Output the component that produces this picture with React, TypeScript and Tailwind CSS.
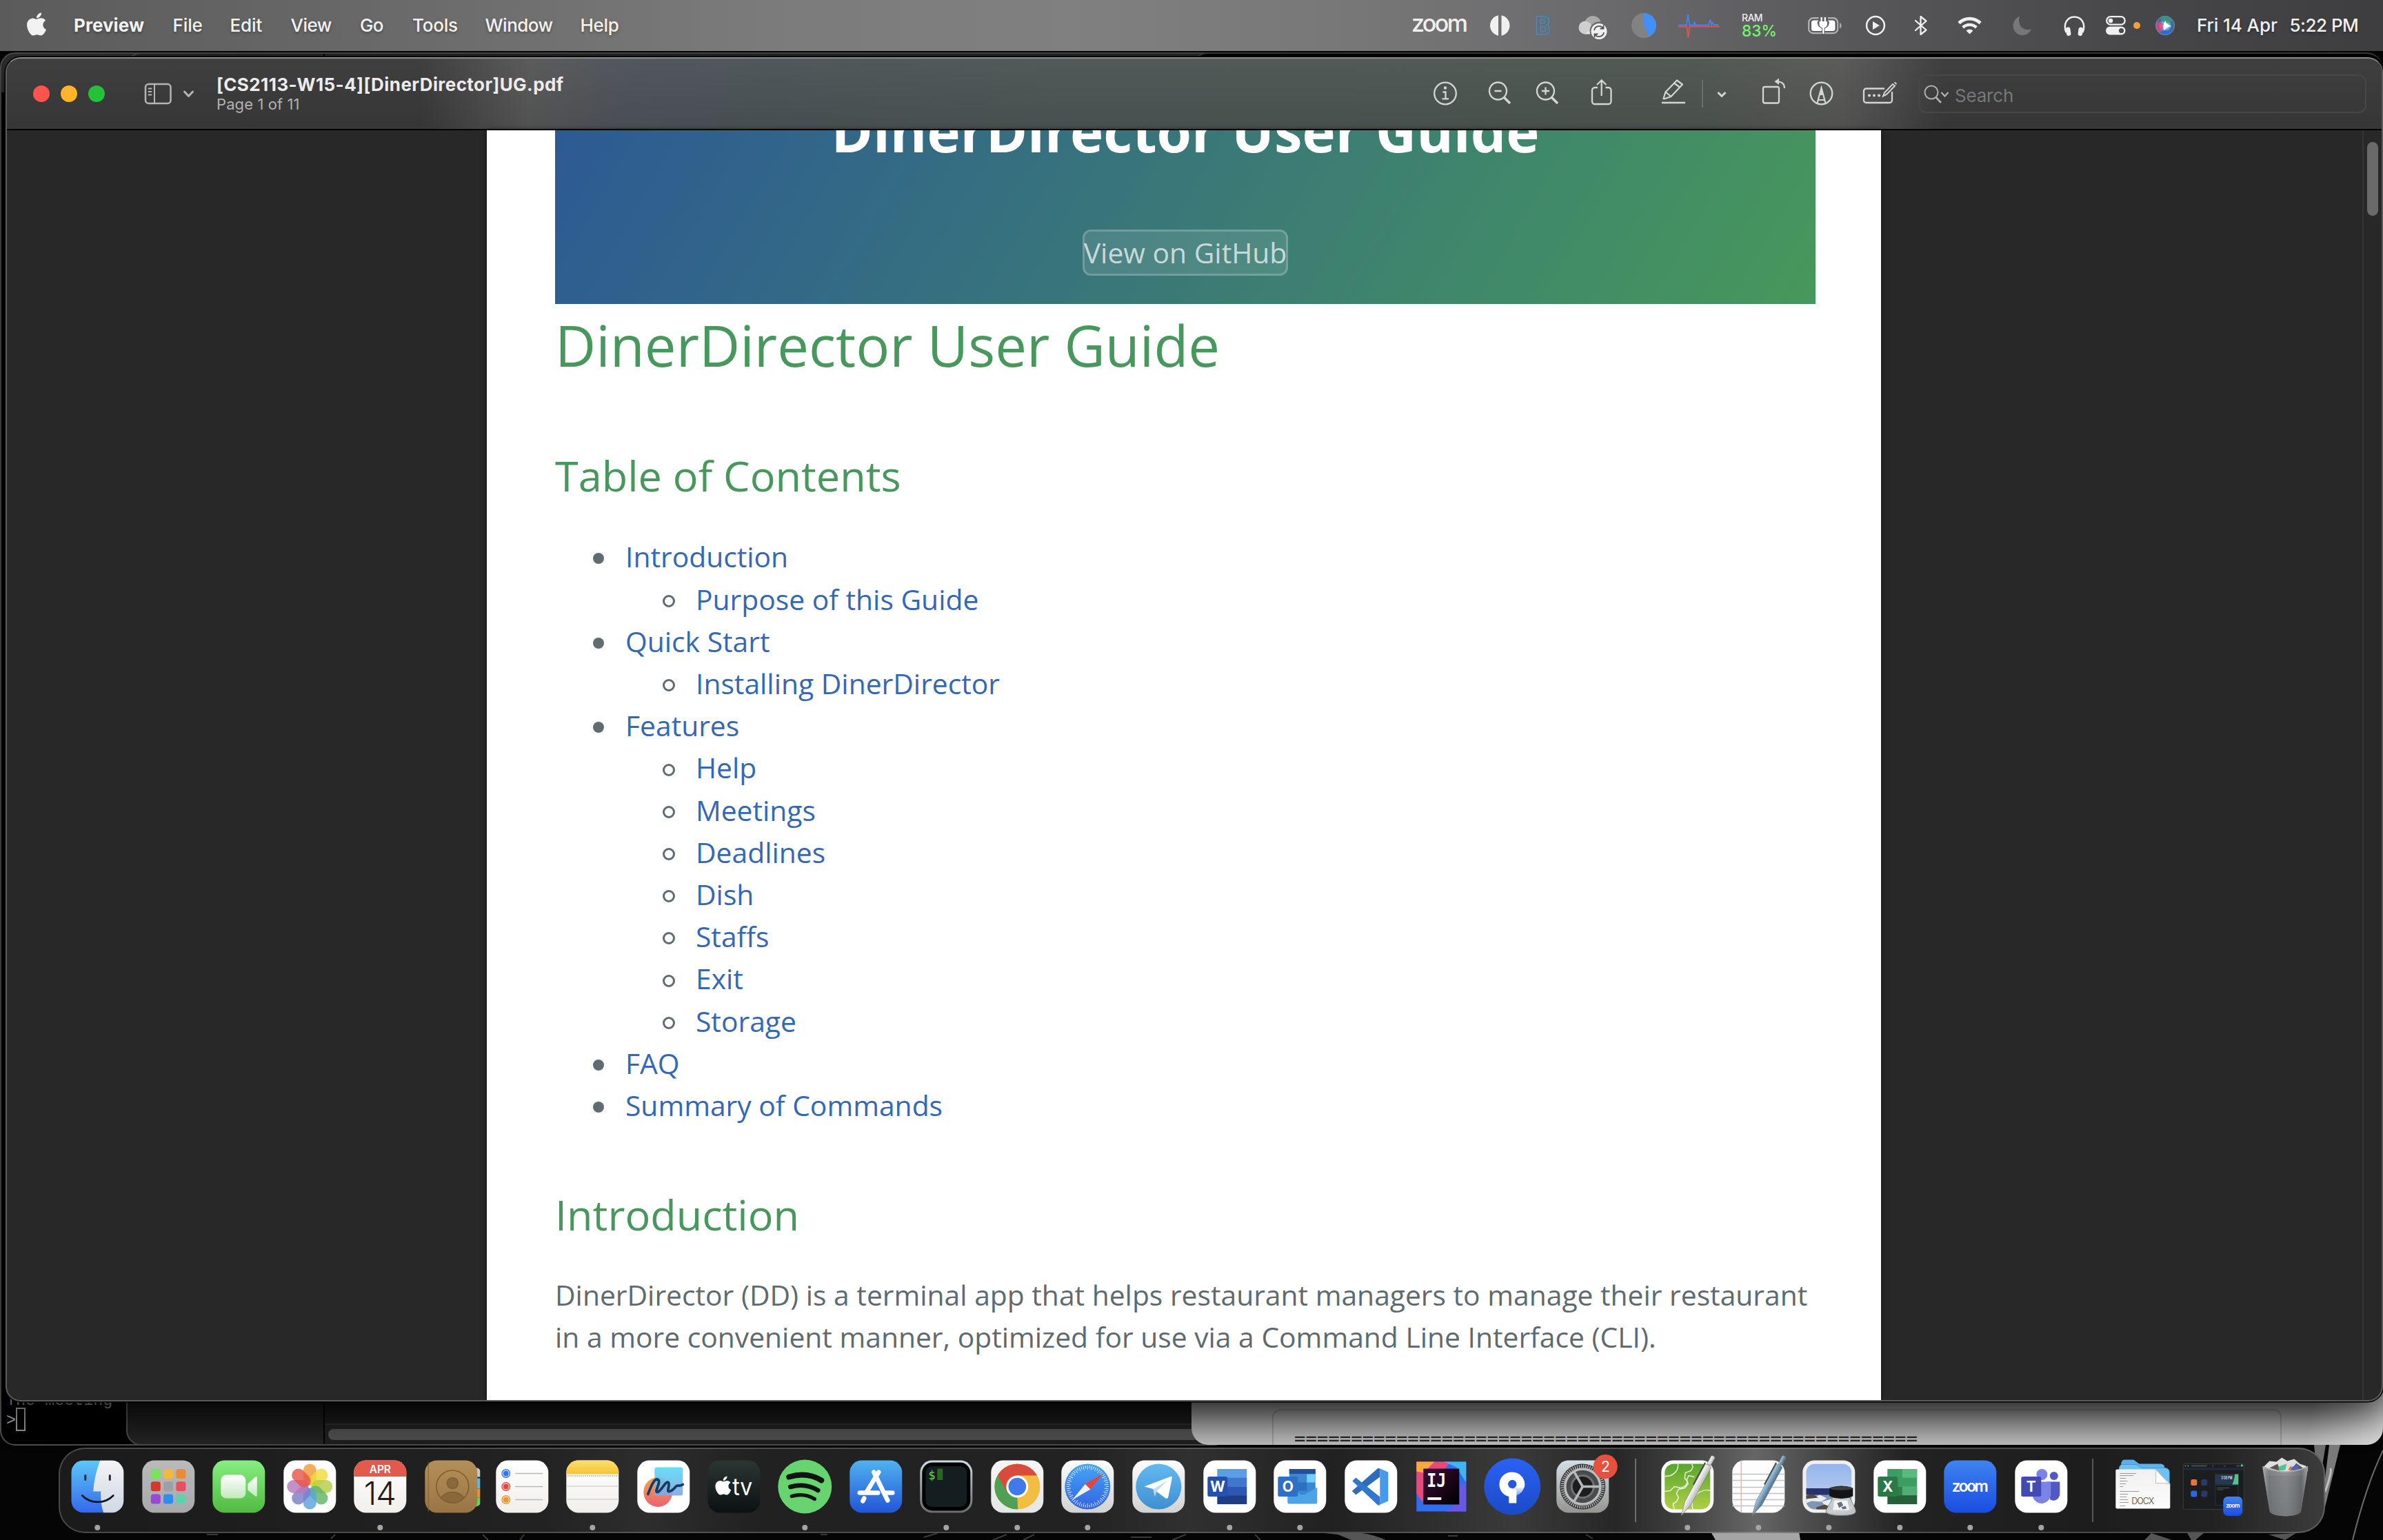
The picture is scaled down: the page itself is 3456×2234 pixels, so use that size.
import React from "react";
import { FaApple } from "react-icons/fa";

type Kids = { children?: React.ReactNode };

/* A slice of a horizontal bar; its drawing uses the bar's own x coordinates. */
function Slice({ x, to, y = 0, h, children }: { x: number; to: number; y?: number; h: number } & Kids) {
  return (
    <svg className="shrink-0 overflow-visible" width={to - x} height={h} viewBox={`${x} ${y} ${to - x} ${h}`} fill="none">
      {children}
    </svg>
  );
}

/* ---------------------------------------------------------------- menu bar */

const MENUS: [string, string][] = [
  ["File", "w-[83px] tracking-[-0.1px]"],
  ["Edit", "w-[88px] tracking-[-0.1px]"],
  ["View", "w-[100.5px] tracking-[-0.5px]"],
  ["Go", "w-[76px] tracking-[-0.8px]"],
  ["Tools", "w-[105.5px] tracking-[-0.2px]"],
  ["Window", "w-[138px] tracking-[-0.5px]"],
  ["Help", "w-[90px] tracking-[-0.3px]"],
];

function MenuBar() {
  const W = "#f0f0f0";
  return (
    <header className="flex h-[74px] w-full items-center justify-between bg-[linear-gradient(90deg,#5b5b5b_0%,#686868_15%,#7b7b7b_32%,#808080_45%,#777777_57%,#69686b_68%,#57575a_78%,#464648_90%,#3e3e40_100%)]">
      <div className="flex items-center pl-[34px] text-[26px] font-medium leading-[74px] text-[#f2f2f2] [text-shadow:0_2px_4px_rgba(0,0,0,0.3)]">
        <div className="flex w-[73px]">
          <FaApple size={38} className="-mt-1" />
        </div>
        <div className="w-[143.5px] font-bold tracking-[0.05px]">Preview</div>
        {MENUS.map(([name, cls]) => (
          <div key={name} className={cls}>{name}</div>
        ))}
      </div>
      <div className="flex items-center">
        <Slice x={2040} to={2145} h={74}>
          <text x="2047" y="46" fontSize="34" fontWeight="500" fill={W} textLength="82">zoom</text>
        </Slice>
        <Slice x={2145} to={2210} h={74}>
          <path d="M2173 22.3A15 15 0 0 0 2173 51.7ZM2177.5 22.3A15 15 0 0 1 2177.5 51.7Z" fill={W} />
        </Slice>
        <Slice x={2210} to={2270} h={74}>
          <text x="2226" y="49.5" fontSize="35" fontWeight="700" stroke="#3a8cc8" strokeWidth="1.5" fontFamily="DejaVu Sans" textLength="24" lengthAdjust="spacingAndGlyphs">B</text>
        </Slice>
        <Slice x={2270} to={2350} h={74}>
          <circle cx="2310" cy="35" r="12" fill="#a9a9a9" />
          <circle cx="2299" cy="40" r="9.5" fill="#cfcfcf" />
          <path d="M2298 49.5L2318 36l10 13.5Z" fill="#e6e6e6" />
          <circle cx="2319" cy="45" r="13.5" fill="#69686a" />
          <circle cx="2319" cy="45.5" r="11.5" fill={W} />
          <path d="M2312 44a7.2 7.2 0 0 1 13-3M2326 47a7.2 7.2 0 0 1-13 3M2325.500 36.500v5h-5M2312.500 54.500v-5h5" stroke="#555" strokeWidth="1.8" />
        </Slice>
        <Slice x={2350} to={2420} h={74}>
          <circle cx="2384" cy="37" r="18" fill="#828282" />
          <path d="M2384 37V19a18 18 0 0 1 7.800 34.200Z" fill="#438ff8" />
        </Slice>
        <Slice x={2420} to={2510} h={74}>
          <path d="M2434 36.500h12l2-16 2.500 16h6l1-5 1.500 5h19l2.200-8.500 2 8 1.500-3 2 3h6.300" stroke="#3f86ee" strokeWidth="1.8" />
          <path d="M2434 38.500h12.500l1.800 16.500 2-16.500H2494" stroke="#e4524a" strokeWidth="1.8" />
        </Slice>
        <Slice x={2510} to={2600} h={74}>
          <text x="2526" y="31" fontSize="14" fontWeight="500" fill={W} textLength="30.5">RAM</text>
          <text x="2526" y="53" fontSize="23.5" fontWeight="500" fill="#72f56c" textLength="51" lengthAdjust="spacingAndGlyphs">83%</text>
        </Slice>
        <Slice x={2600} to={2690} h={74}>
          <rect x="2623.200" y="26.200" width="42" height="22" rx="6.500" stroke="#b3b3b5" strokeWidth="2.200" />
          <rect x="2627" y="29.500" width="34.500" height="15.500" rx="3.500" fill="#fff" />
          <path d="M2668 33c3.500.8 3.500 7.500 0 8.500Z" fill="#aaa" />
          <path d="M2637.500 23v7c-2 .6-2 2-1.500 5 .6 3 3 5 6 6.200V50h4.500v-8.800c3-1.200 5.500-3.200 6-6.200.5-3 .4-4.400-1.500-5v-7Z" fill="#5f5f61" />
          <path d="M2640.500 25v6h-2v4c0 3 2.500 5 4.500 5.500V49h2.500v-8.500c2-.5 4.500-2.500 4.500-5.500v-4h-2v-6h-2.300v6h-3v-6Z" fill="#fff" />
        </Slice>
        <Slice x={2690} to={2755} h={74}>
          <circle cx="2720" cy="37" r="12.900" stroke={W} strokeWidth="2.500" />
          <path d="M2716 31v12l10-6Z" fill={W} />
        </Slice>
        <Slice x={2755} to={2815} h={74}>
          <path d="M2778 30l15.500 13.500-8 6.500V24l8 6.500L2778 44" stroke={W} strokeWidth="2.300" strokeLinejoin="round" strokeLinecap="round" />
        </Slice>
        <Slice x={2815} to={2895} h={74}>
          <path d="M2841 33.500a22 22 0 0 1 31 0" stroke={W} strokeWidth="4.600" />
          <path d="M2846.800 39.800a14 14 0 0 1 19.400 0" stroke={W} strokeWidth="4.400" />
          <path d="M2851.500 44.500a7 7 0 0 1 10 0l-5 5Z" fill={W} />
        </Slice>
        <Slice x={2895} to={2970} h={74}>
          <path d="M2929 23.500c-5.500 2.500-9.500 8-9.500 14.500a13.700 13.700 0 0 0 13.700 13.200c5.500 0 10.500-3.400 12.800-8.700-11 2.800-20.500-4.500-17-19Z" fill="#77777a" />
        </Slice>
        <Slice x={2970} to={3038} h={74}>
          <path d="M2996.500 47c-5-13 2-22.500 12-22.500s17 9.500 12 22.500" stroke={W} strokeWidth="2.500" />
          <rect x="2996.500" y="39.500" width="6.500" height="12.500" rx="3" fill={W} transform="rotate(-8 2999 46)" />
          <rect x="3014" y="39.500" width="6.500" height="12.500" rx="3" fill={W} transform="rotate(8 3017 46)" />
        </Slice>
        <Slice x={3038} to={3112} h={74}>
          <rect x="3055.200" y="24.200" width="26.500" height="11.500" rx="5.700" stroke={W} strokeWidth="2.300" />
          <circle cx="3061" cy="30" r="3.200" fill={W} />
          <rect x="3054" y="38.500" width="28.500" height="12" rx="6" fill={W} />
          <circle cx="3076.500" cy="44.500" r="3.600" fill="#4a4a4c" />
          <circle cx="3099" cy="37" r="5" fill="#f5a03a" />
        </Slice>
        <Slice x={3112} to={3186} h={74}>
          <defs>
            <radialGradient id="siri" cx=".5" cy=".5" r=".5">
              <stop offset="0" stopColor="#fff" />
              <stop offset=".3" stopColor="#9fd0ee" />
              <stop offset=".7" stopColor="#3567a8" />
              <stop offset="1" stopColor="#56708a" />
            </radialGradient>
          </defs>
          <circle cx="3140" cy="37" r="14" fill="url(#siri)" />
          <path d="M3127 33a14 14 0 0 0 5 15c4-3 7-9 6-13-2-4-7-4-11-2Z" fill="#e2457f" opacity=".75" />
          <path d="M3133 25a14 14 0 0 1 18 5c-4 4-10 5-14 2-3-2-4-5-4-7Z" fill="#2f9f7c" opacity=".8" />
          <path d="M3132 49a14 14 0 0 0 18-2c-4-4-14-5-18 2Z" fill="#2b6be0" opacity=".8" />
          <path d="M3140 30l3 5 6 3-7 2-3 4-2-6Z" fill="#fff" />
          <circle cx="3140" cy="37" r="13.500" stroke="#6d8597" strokeWidth="1" />
        </Slice>
        <div className="flex w-[270px] text-[26px] font-medium leading-[74px] text-[#f0f0f0] [text-shadow:0_2px_4px_rgba(0,0,0,0.3)]">
          <span className="w-[134.5px] whitespace-nowrap tracking-[-0.1px]">Fri 14 Apr</span>
          <span className="whitespace-nowrap tracking-[-0.5px]">5:22 PM</span>
        </div>
      </div>
    </header>
  );
}

/* ---------------------------------------------------------- back windows */

function TerminalBehind() {
  return (
    <div className="absolute left-0 top-[76px] flex h-[2021px] w-[400px] flex-col justify-end rounded-[22px] border-2 border-[#4c4c4c] bg-[linear-gradient(180deg,#2e2e2e_0,#2e2e2e_56px,#000_56px)] pl-[7px] font-['Liberation_Mono'] text-[23.400px] text-[#a0a0a0]">
      <div className="-mb-[10px] whitespace-pre leading-[34px] text-[#7a7a7a]">The meeting</div>
      <div className="flex h-[56px] items-start">
        <span className="mt-[5px] leading-[34px]">&gt;</span>
        <span className="mt-[3px] h-[34px] w-[14px] border-2 border-[#8f8f8f]" />
      </div>
    </div>
  );
}

function EditorBehind() {
  return (
    <div className="absolute left-[183px] top-[76px] flex h-[2021px] w-[1600px] rounded-[22px] border-2 border-[#4a4a4a] bg-[#262626]">
      <div className="flex w-[286px] items-end border-r-2 border-black">
        <div className="h-[64px] w-full rounded-bl-[20px] bg-[linear-gradient(180deg,#121212,#232323)]" />
      </div>
      <div className="flex flex-1 flex-col justify-end">
        <div className="h-[32px] bg-[linear-gradient(180deg,#0e0e0e,#1a1a1a)]" />
        <div className="flex h-[30px] items-center border-t-2 border-[#2a2a2a] bg-[#1e1e1e] pl-[5px]">
          <div className="h-[16px] flex-1 rounded-l-full bg-[#4b4b4b]" />
        </div>
      </div>
    </div>
  );
}

function MessageBehind() {
  return (
    <div className="absolute left-[1728px] top-[76px] flex h-[2020px] w-[1728px] flex-col justify-end overflow-hidden rounded-[24px] border-t-2 border-[#3c3c3c] bg-black">
      <div className="flex h-[80px] items-end bg-[linear-gradient(180deg,#5d5d5d,#6b6b6b_20%,#b9b9b9)] pl-[117px]">
        <div className="flex h-[52px] w-[1464px] items-start rounded-t-[12px] border-x-2 border-t-2 border-black/15 pl-[30px] pt-[20px] font-['DejaVu_Sans_Mono'] text-[27.300px] leading-[42px] text-[#222]">
          {"=".repeat(55)}
        </div>
        <div className="h-full flex-1 bg-[linear-gradient(100deg,transparent_30%,rgba(255,255,255,0.45))]" />
      </div>
    </div>
  );
}

/* --------------------------------------------------------- preview window */

function Toolbar() {
  const C = "#d3d6d4";
  return (
    <div className="flex h-[104px] shrink-0 items-center border-b-2 border-black bg-[linear-gradient(180deg,rgba(255,255,255,0.03),rgba(0,0,0,0.06)),linear-gradient(90deg,#393939_0px,#393939_600px,#565656_755px,#4d5259_890px,#4b5256_1100px,#4b5553_1500px,#4c5552_1950px,#4d544e_2450px,#565755_2660px,#4f504f_2700px,#393939_2810px,#393939_100%)]">
      <div className="flex w-[304px] items-center">
        <div className="flex w-[142px] shrink-0 gap-[16px] pl-[38px]">
          <span className="size-[24px] rounded-full bg-[#ff544d]" />
          <span className="size-[24px] rounded-full bg-[#ffb429]" />
          <span className="size-[24px] rounded-full bg-[#25c138]" />
        </div>
        <Slice x={152} to={306} y={84} h={104}>
          <g stroke="#b5b5b5" strokeWidth="2.500" strokeLinecap="round" strokeLinejoin="round">
            <rect x="211" y="122" width="36.500" height="28" rx="4.500" />
            <path d="M224 122v28M215.500 128.500h4M215.500 133h4M215.500 137.500h4" strokeWidth="2" />
            <path d="M267.500 133l6 6.500 6-6.500" strokeWidth="3" />
          </g>
        </Slice>
      </div>
      <div className="flex w-[1746px] flex-col">
        <div className="whitespace-nowrap text-[26px] font-bold leading-[30px] tracking-[0.42px] text-[#ececec]">[CS2113-W15-4][DinerDirector]UG.pdf</div>
        <div className="text-[22px] leading-[26px] tracking-[0.1px] text-[#b2b2b2]">Page 1 of 11</div>
      </div>
      <Slice x={2060} to={2135} y={84} h={104}>
        <circle cx="2096" cy="135.500" r="15.800" stroke={C} strokeWidth="2.300" />
        <circle cx="2096" cy="127.500" r="2.200" fill={C} />
        <path d="M2092.500 133.500h4v9.500M2091.500 143.300h9.500" stroke={C} strokeWidth="2.300" />
      </Slice>
      <Slice x={2135} to={2210} y={84} h={104}>
        <circle cx="2172.500" cy="132" r="12.500" stroke={C} strokeWidth="2.300" />
        <path d="M2167.500 132h10" stroke={C} strokeWidth="2.300" />
        <path d="M2181.500 141.500l8.500 8.500" stroke={C} strokeWidth="3.600" />
      </Slice>
      <Slice x={2210} to={2285} y={84} h={104}>
        <circle cx="2241.500" cy="132" r="12.500" stroke={C} strokeWidth="2.300" />
        <path d="M2236 132h11M2241.500 126.500v11" stroke={C} strokeWidth="2.300" />
        <path d="M2250.500 141.500l8.500 8.500" stroke={C} strokeWidth="3.600" />
      </Slice>
      <Slice x={2285} to={2380} y={84} h={104}>
        <path d="M2317 127h-4a4 4 0 0 0-4 4v16a4 4 0 0 0 4 4h19.500a4 4 0 0 0 4-4v-16a4 4 0 0 0-4-4h-4" stroke={C} strokeWidth="2.300" />
        <path d="M2322.700 139v-22M2316 123l6.700-6.700 6.700 6.700" stroke={C} strokeWidth="2.300" />
      </Slice>
      <Slice x={2380} to={2530} y={84} h={104}>
        <path d="M2412.500 143l3-9.500 16.500-17 8 6-16.500 17.500-10 3.500ZM2428 120.500l8 6M2415.500 133.500l8 6.500" stroke={C} strokeWidth="2.200" strokeLinejoin="round" />
        <path d="M2410 149h34" stroke={C} strokeWidth="2.400" />
        <path d="M2469 116v40" stroke="#6a6f6b" strokeWidth="2" />
        <path d="M2491.500 134l5.500 5.500 5.500-5.500" stroke={C} strokeWidth="3" />
      </Slice>
      <Slice x={2530} to={2610} y={84} h={104}>
        <rect x="2557" y="126" width="23" height="23.500" rx="2.500" stroke={C} strokeWidth="2.300" />
        <path d="M2588 128c0-6-3.500-9.500-10-9.500h-3" stroke={C} strokeWidth="2" />
        <path d="M2580 113.500v9.500l-6.500-4.800Z" fill={C} />
      </Slice>
      <Slice x={2610} to={2680} y={84} h={104}>
        <circle cx="2641.500" cy="135.500" r="15.800" stroke={C} strokeWidth="2.300" />
        <path d="M2635.500 149.500l6-22 6 22M2637 145h9" stroke={C} strokeWidth="2.200" />
        <path d="M2641.500 127l3 11h-6Z" fill={C} />
      </Slice>
      <Slice x={2680} to={2782} y={84} h={104}>
        <path d="M2733 128.500h-26.500a3.500 3.500 0 0 0-3.500 3.500v13.500a3.500 3.500 0 0 0 3.500 3.500h34a3.500 3.500 0 0 0 3.500-3.500V133" stroke={C} strokeWidth="2.300" />
        <circle cx="2711" cy="138.500" r="2" fill={C} />
        <circle cx="2718" cy="138.500" r="2" fill={C} />
        <circle cx="2725" cy="138.500" r="2" fill={C} />
        <path d="M2731 139.500l2-5 12-12.500 3 2.500-12 12.500ZM2747.500 119.500l3 2.500" stroke={C} strokeWidth="2" />
      </Slice>
      <div className="flex h-[56px] w-[650px] items-center rounded-[11px] border-2 border-[#474747]">
        <Slice x={2784} to={2835} y={108} h={56}>
          <circle cx="2801" cy="134" r="9.500" stroke="#b0b0b0" strokeWidth="2" />
          <path d="M2807.500 141l7.500 8" stroke="#b0b0b0" strokeWidth="2.600" />
          <path d="M2815.500 134l5 5.500 5-5.500" stroke="#b0b0b0" strokeWidth="2.300" />
        </Slice>
        <span className="mt-[6px] text-[26px] leading-[30px] tracking-[-0.2px] text-[#777]">Search</span>
      </div>
    </div>
  );
}

type Entry = { t: string; sub?: string[] };
const TOC: Entry[] = [
  { t: "Introduction", sub: ["Purpose of this Guide"] },
  { t: "Quick Start", sub: ["Installing DinerDirector"] },
  { t: "Features", sub: ["Help", "Meetings", "Deadlines", "Dish", "Staffs", "Exit", "Storage"] },
  { t: "FAQ" },
  { t: "Summary of Commands" },
];

function Page() {
  return (
    <article className="w-[2022px] shrink-0 overflow-hidden bg-white px-[99px] font-['Open_Sans'] text-[40.800px] leading-[61.200px] text-[#5f6a6f] shadow-[0_0_8px_rgba(0,0,0,0.6)]">
      <div className="-mt-[199px] flex h-[451px] w-[1828px] flex-col items-center bg-[linear-gradient(120deg,#2b5697,#47985b)] pt-[159px]">
        <h1 className="whitespace-nowrap text-[81.600px] font-bold leading-[82px] text-white">DinerDirector User Guide</h1>
        <a className="mt-[102px] flex h-[67px] w-[298px] items-center justify-center whitespace-nowrap rounded-[12px] border-[3px] border-white/20 bg-white/10 text-white/70">
          View on GitHub
        </a>
      </div>
      <h1 className="mt-[19px] text-[81.600px] leading-[82px] text-[#48985d]">DinerDirector User Guide</h1>
      <h2 className="mt-[117.400px] text-[61.200px] leading-[61.200px] text-[#48985d]">Table of Contents</h2>
      <ul className="mt-[56.800px] text-[#3568b4]">
        {TOC.map((e) => (
          <li key={e.t}>
            <div className="flex items-center">
              <span className="ml-[55px] mr-[31px] mt-[5px] size-[16px] rounded-full bg-[#606c71]" />
              {e.t}
            </div>
            {e.sub?.map((s) => (
              <div key={s} className="flex items-center">
                <span className="ml-[156px] mr-[30px] mt-[5px] size-[18px] rounded-full border-[3px] border-[#606c71]" />
                {s}
              </div>
            ))}
          </li>
        ))}
      </ul>
      <h2 className="mt-[96.800px] text-[61.200px] leading-[61.200px] text-[#48985d]">Introduction</h2>
      <p className="mt-[56px] whitespace-nowrap">
        DinerDirector (DD) is a terminal app that helps restaurant managers to manage their restaurant
        <br />
        in a more convenient manner, optimized for use via a Command Line Interface (CLI).
      </p>
    </article>
  );
}

function PreviewWindow() {
  return (
    <main className="absolute left-[8px] top-[83px] flex h-[1950px] w-[3448px] flex-col overflow-hidden rounded-[22px] border-[2px] border-[#5c5c5c] border-t-[#8c8c8c] bg-[#282828] shadow-[0_0_0_1.500px_#000,0_16px_50px_rgba(0,0,0,0.6)]">
      <Toolbar />
      <div className="flex min-h-0 flex-1 justify-between pl-[696px]">
        <Page />
        <div className="flex w-[28px] justify-center border-l-2 border-[#353535] pt-[17px]">
          <div className="h-[107px] w-[16px] rounded-full bg-[#6a6a6a]" />
        </div>
      </div>
    </main>
  );
}

/* -------------------------------------------------------------------- dock */

/* One dock slot: origin in the middle of the icon, the tile spans -38..38. */
function Slot({ dot, children }: { dot?: boolean } & Kids) {
  return (
    <svg className="shrink-0 overflow-visible" width="102.6" height="124" viewBox="-51.3 -56.5 102.6 124">
      {children}
      {dot && <circle cx="0" cy="59.500" r="4" fill="#a4a4a4" />}
    </svg>
  );
}

function Tile({ fill }: { fill: string }) {
  return <rect x="-38" y="-38" width="76" height="76" rx="17.500" fill={fill} />;
}

function Lin({ id, a, b, x2 = 0, y2 = 1 }: { id: string; a: string; b: string; x2?: number; y2?: number }) {
  return (
    <linearGradient id={id} x1="0" y1="0" x2={x2} y2={y2}>
      <stop offset="0" stopColor={a} />
      <stop offset="1" stopColor={b} />
    </linearGradient>
  );
}

function Defs() {
  return (
    <svg className="absolute size-0">
      <defs>
        <Lin id="finder" a="#5cc8f8" b="#3568ec" />
        <Lin id="finderR" a="#f4f4f5" b="#cfd8e4" />
        <Lin id="grey" a="#b9babb" b="#a9a9ab" />
        <Lin id="green" a="#85ee80" b="#50bb42" />
        <Lin id="cam" a="#ffffff" b="#c2e8bd" />
        <Lin id="white" a="#ffffff" b="#f0efeb" />
        <Lin id="brown" a="#b39058" b="#9a7544" />
        <Lin id="yellow" a="#fbdf6b" b="#f6c435" />
        <Lin id="ffBlue" a="#56dcf8" b="#86a4e2" />
        <Lin id="ffOrange" a="#f2a24a" b="#ec6372" />
        <Lin id="tv" a="#2b3634" b="#0c1012" />
        <Lin id="store" a="#4fb2ee" b="#2355d8" />
        <Lin id="steel" a="#c6dfe8" b="#6b6b6c" />
        <Lin id="chromeBg" a="#f6f6f6" b="#e6e6e6" />
        <Lin id="safariBg" a="#fdfdfd" b="#d2d2d3" />
        <Lin id="safari" a="#42a5f4" b="#3464e2" />
        <Lin id="tele" a="#63b8f3" b="#3f8fcf" />
        <Lin id="src" a="#2a62f6" b="#1b4ac4" />
        <Lin id="srcFade" a="#ffffff" b="#7f9df0" />
        <Lin id="prefs" a="#d3dfe6" b="#969590" />
        <Lin id="ijDark" a="#3c0c38" b="#000000" x2={1} />
        <Lin id="cot" a="#58a52d" b="#add045" />
        <Lin id="pen" a="#fafafa" b="#b9b9b9" x2={1} y2={0} />
        <Lin id="penB" a="#a4cbe6" b="#4d6e88" x2={1} y2={0} />
        <Lin id="sky" a="#93b4ec" b="#c6d4ec" />
        <Lin id="zoomBlue" a="#3f83f0" b="#1a4de2" />
        <Lin id="folder" a="#58aee4" b="#72c8f8" />
        <Lin id="paper" a="#f0f0f1" b="#fcfcfc" />
        <Lin id="bin" a="#868889" b="#6f7478" />
        <linearGradient id="binX" x1="0" x2="1">
          <stop offset="0" stopColor="#c6c8c9" stopOpacity=".75" />
          <stop offset=".15" stopColor="#6b6f72" stopOpacity=".4" />
          <stop offset=".5" stopColor="#9c9fa0" stopOpacity=".3" />
          <stop offset=".85" stopColor="#54585a" stopOpacity=".5" />
          <stop offset="1" stopColor="#b5b8ba" stopOpacity=".75" />
        </linearGradient>
        <clipPath id="tileClip"><rect x="-38" y="-38" width="76" height="76" rx="17.500" /></clipPath>
        <clipPath id="discClip"><circle r="33" /></clipPath>
        <clipPath id="innerClip"><rect x="-33" y="-33" width="66" height="66" rx="13" /></clipPath>
      </defs>
    </svg>
  );
}

const GRID = ["#7be35a", "#f5b93a", "#ea8c34", "#d23a2e", "#9aa0a4", "#e8505e", "#9a48d6", "#2f8df0", "#62cfae"];
const PETALS = ["#f19a38", "#f2da3a", "#b3cf48", "#62b464", "#5aa2dc", "#7a7ec6", "#b878bc", "#e6564a"];

function Finder() {
  return (
    <Slot dot>
      <g clipPath="url(#tileClip)">
        <Tile fill="url(#finder)" />
        <path d="M4-38C-2-22-5-8-6 7H5c-.5 11 .5 22 4 31h30v-76Z" fill="url(#finderR)" />
      </g>
      <path d="M-17.500-16v6M18-16v6" stroke="#1d2a3c" strokeWidth="3" strokeLinecap="round" />
      <path d="M-22 13c12 12.500 33 12.500 45 0" stroke="#14181d" strokeWidth="2.600" fill="none" strokeLinecap="round" />
    </Slot>
  );
}

function Launchpad() {
  return (
    <Slot>
      <Tile fill="url(#grey)" />
      {GRID.map((c, i) => (
        <rect key={c} x={-25.500 + (i % 3) * 18.300} y={-25.500 + Math.floor(i / 3) * 18.300} width="14" height="14" rx="3.500" fill={c} />
      ))}
    </Slot>
  );
}

function Compass() {
  return (
    <Slot dot>
      <Tile fill="url(#safariBg)" />
      <circle r="33" fill="url(#safari)" />
      {Array.from({ length: 60 }, (_, i) => (
        <path key={i} d={i % 2 ? "M0-30.500v4" : "M0-30.500v6"} stroke="#fff" strokeOpacity=".8" strokeWidth="1" transform={`rotate(${i * 6})`} />
      ))}
      <path d="M23-19.500L4 4-3.500-3.500Z" fill="#e9433a" />
      <path d="M-22.500 19.500L-3.500-3.500 4 4Z" fill="#f2f2f2" />
    </Slot>
  );
}

function Office({ letter, c, bands, badge }: { letter: string; c: string; bands: string[]; badge: string }) {
  return (
    <Slot dot>
      <Tile fill="#ffffff" />
      {bands.map((b, i) => (
        <rect key={i} x="-18" y={-25.500 + i * 12.700} width="43" height="13" fill={b} />
      ))}
      {letter === "X" && <path d="M3.500-25.500h21.500v12.700H3.500ZM3.500-.1H25v12.700H3.500Z" fill={c} opacity=".55" />}
      <rect x="-32" y="-14.500" width="29" height="29" rx="2.500" fill={badge} />
      <text y="7.500" x="-17.500" fontSize="21" fontWeight="700" fill="#fff" textAnchor="middle">{letter}</text>
    </Slot>
  );
}

function Gear() {
  return (
    <Slot>
      <Tile fill="url(#prefs)" />
      <circle r="33" fill="#2c2c2c" />
      <circle r="29.500" fill="none" stroke="#a9abac" strokeWidth="5" strokeDasharray="1.600 1.500" />
      <circle r="25.500" fill="#4a4b4c" stroke="#bcbebf" strokeWidth="3.400" />
      <circle r="16" fill="#1d1d1d" stroke="#6f7172" strokeWidth="3" />
      {[0, 120, 240].map((a) => (
        <path key={a} d="M0 0H25" stroke="#b6b8b9" strokeWidth="3.600" transform={`rotate(${a})`} />
      ))}
      <circle cx="33" cy="-29" r="17.500" fill="#e5503f" />
      <text x="33" y="-21.500" fontSize="21" fill="#fff" textAnchor="middle">2</text>
    </Slot>
  );
}

function Pen({ fill }: { fill: string }) {
  return (
    <g transform="translate(-9 42) rotate(28.500)">
      <path d="M0 0L-5-20V-82q5-3 10 0v62Z" fill={fill} stroke="#777" strokeWidth=".6" />
      <rect x="-3" y="-98" width="6" height="14" rx="2" fill={fill} stroke="#777" strokeWidth=".6" />
      <path d="M-6-84v36" stroke="#4b4b4b" strokeWidth="2" />
    </g>
  );
}

function Dock() {
  return (
    <nav className="absolute left-[85px] top-[2100px] flex h-[124px] w-[3287px] items-center rounded-[38px] bg-[linear-gradient(90deg,#1b1b1b_0,#222_700px,#2d2d2d_850px,#212121_1020px,#222_1480px,#303030_1640px,#212121_1850px,#3a3a3a_2110px,#272727_2260px,#3c3c3c_2340px,#666_2460px,#4c4c4c_2540px,#222_2680px,#1d1d1d_2950px,#222_3120px,#3b3b3b_3280px)] pl-[5px] shadow-[inset_0_0_0_2px_rgba(255,255,255,0.2)]">
      <Defs />
      <Finder />
      <Launchpad />
      <Slot>
        <Tile fill="url(#green)" />
        <rect x="-26" y="-17" width="36" height="34" rx="8" fill="url(#cam)" />
        <path d="M13-4L24-14q2.500-1.500 2.500 1.500v25q0 3-2.500 1.500L13 5Z" fill="url(#cam)" />
      </Slot>
      <Slot>
        <Tile fill="#fdfdfd" />
        {PETALS.map((c, i) => (
          <rect key={c} x="-9.500" y="-33" width="19" height="31" rx="9.500" fill={c} opacity=".82" transform={`rotate(${i * 45})`} />
        ))}
      </Slot>
      <Slot dot>
        <Tile fill="url(#white)" />
        <path d="M-38-14.500v-6A17.500 17.500 0 0 1-20.500-38h41A17.500 17.500 0 0 1 38-20.500v6Z" fill="#e2594e" />
        <text y="-20" fontSize="15.500" fontWeight="600" fill="#fff" textAnchor="middle" textLength="31">APR</text>
        <text y="26" fontSize="47" fontWeight="300" fill="#1c1c1c" textAnchor="middle" textLength="47">14</text>
      </Slot>
      <Slot>
        <path d="M34-27h4q4 1 4 5v8h-8Z" fill="#c9c9c9" />
        <path d="M34-12h8V3h-8Z" fill="#5fb6ea" />
        <path d="M34 3h8v13h-8Z" fill="#ee8f35" />
        <path d="M34 16h8v8q0 4-6 5Z" fill="#63d453" />
        <Tile fill="url(#brown)" />
        <path d="M-33-36v72" stroke="#7d5d33" strokeWidth="1.400" opacity=".6" />
        <g fill="none" stroke="#7f6036" strokeWidth="1.700">
          <circle cx="2" r="23.500" />
          <circle cx="2" cy="-5" r="8" fill="#8a683c" />
          <path d="M-14 17c4-12 28-12 32 0-8 9-24 9-32 0Z" fill="#8a683c" />
        </g>
      </Slot>
      <Slot>
        <Tile fill="url(#white)" />
        {["#2f73ee", "#e3483d", "#ef9430"].map((c, i) => (
          <g key={c} transform={`translate(0 ${-19 + i * 19})`}>
            <circle cx="-23.500" r="5.800" fill="none" stroke={c} strokeWidth="1.400" />
            <circle cx="-23.500" r="3.900" fill={c} />
            <path d="M-10 0h40" stroke="#b5b8bc" strokeWidth="1.600" />
          </g>
        ))}
      </Slot>
      <Slot dot>
        <Tile fill="url(#white)" />
        <path d="M-38-18v-2.500A17.500 17.500 0 0 1-20.500-38h41A17.500 17.500 0 0 1 38-20.500v2.500Z" fill="url(#yellow)" />
        <path d="M-38-15.500h76" stroke="#bdb9ae" strokeWidth="2" strokeDasharray="1.500 1.500" />
        <path d="M-38-.5h76M-38 18.500h76" stroke="#d5d4d0" strokeWidth="1.500" />
      </Slot>
      <Slot>
        <Tile fill="#ffffff" />
        <ellipse cx="-8" cy="8" rx="21" ry="21.500" fill="url(#ffOrange)" />
        <rect x="-13" y="-28" width="41" height="41" rx="3" fill="url(#ffBlue)" opacity=".92" />
        <path d="M-22.500 11C-18-1-13-13-8-10c5 3-6 18-1 18C-4 8 3-9 7-6c3 3-3 13 1 13 5 0 8-6 11-8 2-1 5 1 9-2" stroke="#143d63" strokeWidth="3.800" fill="none" strokeLinecap="round" />
      </Slot>
      <Slot>
        <Tile fill="url(#tv)" />
        <FaApple x={-31} y={-17} size={31} color="#fff" />
        <text x="-2" y="12" fontSize="34" fontWeight="400" fill="#fff" textLength="29" lengthAdjust="spacingAndGlyphs">tv</text>
      </Slot>
      <Slot dot>
        <circle r="39" fill="#67d470" />
        <g fill="none" stroke="#0e1510" strokeLinecap="round">
          <path d="M-23-14c17-5 34-3 47 5" strokeWidth="8" />
          <path d="M-21 .5c14-4 28-2.500 40 5" strokeWidth="6.600" />
          <path d="M-19 14c12-3.500 23-2 33 4" strokeWidth="5.400" />
        </g>
      </Slot>
      <Slot>
        <Tile fill="url(#store)" />
        <g stroke="#fff" strokeWidth="6.500" strokeLinecap="round">
          <path d="M4-21L-13 7M-3-21L17 20M-23.500 9H3M15 9h9M-17 17l-2 4" />
        </g>
      </Slot>
      <Slot dot>
        <Tile fill="url(#steel)" />
        <rect x="-35" y="-35" width="70" height="70" rx="15" fill="#000" />
        <rect x="-30" y="-29.500" width="60" height="59" rx="9" fill="#141d20" />
        <text x="-26" y="-11" fontSize="17" fill="#62dd3c" fontFamily="DejaVu Sans Mono">$</text>
        <rect x="-13" y="-26" width="8" height="16.500" fill="#2c6620" />
      </Slot>
      <Slot dot>
        <Tile fill="url(#chromeBg)" />
        <g clipPath="url(#discClip)">
          <circle r="33" fill="#f3bd42" />
          <path d="M-28.600-16.500L-13 8 0 16 1 34H-40V-16Z" fill="#4fa052" />
          <path d="M14.500 8.500L0 33h34v-49H0Z" fill="#f3bd42" />
          <path d="M-28.600-16.500L-28-34H28l1.500 18H0L-14.500 8Z" fill="#da4b3c" />
        </g>
        <circle r="16" fill="#fff" />
        <circle r="12.800" fill="#4178ea" />
      </Slot>
      <Compass />
      <Slot>
        <Tile fill="url(#safariBg)" />
        <circle r="33" fill="url(#tele)" />
        <path d="M-21 0L17-14.500q3-1 2.500 2L14 15q-1 4-4.500 1.500L-8 3.500Z" fill="#fff" />
        <path d="M-8 4L13-9-3 7l-2.500 8Z" fill="#c4dbea" />
      </Slot>
      <Office letter="W" c="#2b5bb5" badge="#2450ae" bands={["#5a9fe6", "#4077cd", "#2c58b4", "#1f3c86"]} />
      <Slot dot>
        <Tile fill="#ffffff" />
        <rect x="-15.500" y="-25.500" width="38" height="38" fill="#3a87d4" />
        <path d="M-15.500-25.500h38v7h-38Z" fill="#22509a" />
        <path d="M10-18h12.500V-6H10Z" fill="#6fd3f9" />
        <path d="M-3-6h13V6H-3Z" fill="#2d70c0" />
        <path d="M-18 0L4 13 25 1v22q0 2-2 2h-39q-2 0-2-2Z" fill="#4ca4e6" />
        <rect x="-32" y="-14.500" width="29" height="29" rx="2.500" fill="#2f6fc4" />
        <text x="-17.500" y="7.500" fontSize="21" fontWeight="700" fill="#fff" textAnchor="middle">O</text>
      </Slot>
      <Slot>
        <Tile fill="#ffffff" />
        <path d="M-27 7l5 5 35-26v-12.500h-3L-27 6Z" fill="#2f6dbb" />
        <path d="M-27-8l5-5 35 28v12h-3Z" fill="#3177cb" />
        <path d="M11-27l14 6v42l-14 6 2-4v-46Z" fill="#469ae8" />
      </Slot>
      <Slot>
        <rect x="-36" y="-36" width="72" height="72" fill="#2d6ff0" />
        <path d="M-36-36H14L0-20-28 22-36 10Z" fill="#ea4878" />
        <path d="M-36-36h26l-16 16-10-2Z" fill="#f6a93e" />
        <path d="M36-36v30L22-28 4-36Z" fill="#42b4f0" />
        <path d="M36 36H6l20-14V0l10-6Z" fill="#6a58e4" />
        <rect x="-26" y="-26" width="52" height="52" fill="url(#ijDark)" />
        <text x="-21" y="0" fontSize="27" fontWeight="700" fill="#fff" fontFamily="DejaVu Sans Mono" textLength="28" lengthAdjust="spacingAndGlyphs">IJ</text>
        <path d="M-20 17.500H0" stroke="#fff" strokeWidth="3.800" />
      </Slot>
      <Slot>
        <circle r="41" fill="url(#src)" />
        <path d="M6 13a18 18 0 0 0 11.500-14H5L0 4v9Z" fill="url(#srcFade)" />
        <path d="M0-21a18 18 0 0 0-5 35.500V24H6V4.500A8 8 0 0 1 0 2.500a6 6 0 1 1 6-6c0 2-1 4-2 5h13.500A18 18 0 0 0 0-21Z" fill="#fff" />
        <circle cy="-3.500" r="6" fill="#2359e0" />
      </Slot>
      <Gear />
      <div className="mx-[23.500px] h-[92px] w-[2px] shrink-0 bg-[#6c6c6c]" />
      <Slot dot>
        <Tile fill="#fdfdfd" />
        <rect x="-33" y="-33" width="66" height="66" rx="13" fill="url(#cot)" />
        <g clipPath="url(#innerClip)" fill="none" stroke="#fff" strokeOpacity=".85" strokeWidth="1.500">
          <path d="M-14-34c2 12-8 20-20 19M6-34l2 6-3 5-8 3-1 8 4 5-3 6-6 3-10-2-6 6-9 1M10-14l-8-2-3 6 2 6-5 6-9 2-3 6 3 6-3 6-5 3 2 8-3 5M34 6C20 2 2 14 8 34" />
        </g>
        <Pen fill="url(#pen)" />
      </Slot>
      <Slot dot>
        <Tile fill="#fdfdfd" />
        <path d="M-38-18h76M-38-9h76M-38 1h76M-38 10h76M-38 19h76M-38 28h76" stroke="#bfc1c3" strokeWidth="1.400" />
        <path d="M-25-38v76" stroke="#f0b4ae" strokeWidth="1.500" />
        <Pen fill="url(#penB)" />
      </Slot>
      <Slot dot>
        <Tile fill="#f1efee" />
        <g clipPath="url(#innerClip)">
          <rect x="-33" y="-33" width="66" height="66" fill="url(#sky)" />
          <rect x="-33" y="2.500" width="66" height="10" fill="#27326e" />
          <rect x="-33" y="12" width="66" height="22" fill="#7d97b4" />
          <path d="M-33 12l12 3 8-3 10 5-8 5-14-1-8 3ZM-10 22l14-4 4 9-12 3Z" fill="#e9eef2" />
          <path d="M-33 13l10-2 8 5-18 2ZM-18 30l12-4 10 4v4h-22Z" fill="#54493e" />
        </g>
        <path d="M5 16h26c2 8 8 14 8 20 0 4-8 6-21 6S-4 40-4 36C-4 30 4 24 5 16Z" fill="#c8ccd0" stroke="#70747a" strokeWidth="1" opacity=".95" />
        <path d="M8 20h19l3 14H6Z" fill="#f1f3f4" />
        <path d="M12 24l6-2 3 5-6 4ZM18 30l6-2 2 4-6 1Z" fill="#67727d" />
        <path d="M1 2q17-6 34 0v12q-17 7-34 0Z" fill="#141414" />
        <ellipse cx="18" cy="2.500" rx="16.500" ry="2.800" fill="#3d3d3d" />
      </Slot>
      <Office letter="X" c="#6fd398" badge="#2a7a45" bands={["#3c9c62", "#3c9c62", "#2f7f4a", "#265f3a"]} />
      <Slot dot>
        <Tile fill="url(#zoomBlue)" />
        <text y="7" fontSize="22.500" fontWeight="600" fill="#fff" textAnchor="middle" textLength="53">zoom</text>
      </Slot>
      <Slot dot>
        <Tile fill="#ffffff" />
        <circle cx="18.500" cy="-15.500" r="6" fill="#5059c4" />
        <path d="M8-7h19v18a9.500 9.500 0 0 1-14 8Z" fill="#5059c4" />
        <circle cx="1" cy="-17.500" r="8" fill="#7b83e6" />
        <path d="M-12-7h26v18a13.500 13.500 0 0 1-26 5Z" fill="#7b83e6" />
        <rect x="-29" y="-14.500" width="29" height="29" rx="2.500" fill="#4549b4" />
        <text x="-14.500" y="7.500" fontSize="21" fontWeight="700" fill="#fff" textAnchor="middle">T</text>
      </Slot>
      <div className="mx-[22px] h-[92px] w-[2px] shrink-0 bg-[#565656]" />
      <Slot>
        <path d="M-33-34q1-5 5-5h13l8 6h32q5 1 5 6v32h-63Z" fill="url(#folder)" />
        <path d="M-36-27q1-5 5-5h20l8 5h34q6 1 6 6v22h-73Z" fill="#6fc1f3" stroke="#3f8fc8" strokeWidth=".8" />
        <path d="M-41-23q0-2 2-2h55L38-4v34q0 2-2 2h-75q-2 0-2-2Z" fill="url(#paper)" />
        <path d="M17-25q1 4 0 20 12-1 20 1.500Z" fill="#fff" stroke="#bbb" strokeWidth="1" />
        <path d="M-35-19h24M-35-16h20M-35-12h9M-35-8h11M-35-4h9M-35 0h5M-35 7h28M-35 11h12M-35 15h10M-35 19h12M-35 23h13M-35 28h8" stroke="#9a9a9a" strokeWidth="1.100" />
        <text x="-18" y="26" fontSize="12.500" fill="#6a6a6a" textLength="33">DOCX</text>
      </Slot>
      <Slot>
        <rect x="-45" y="-33" width="88" height="66" rx="1.500" fill="#1c1d1f" stroke="#3a3b3d" strokeWidth="1" />
        <rect x="-44.500" y="-27" width="87" height="3" fill="#1d2c44" />
        <path d="M-43-30h2" stroke="#e2554a" strokeWidth="1.500" />
        <path d="M-39-30h2" stroke="#4fb04f" strokeWidth="1.500" />
        <path d="M-33-30h22M-3-30h2M14-30h2M32-30h5" stroke="#4c4d50" strokeWidth="2" />
        <rect x="38.500" y="-32" width="3" height="3" fill="#4fd07a" />
        <rect x="-34" y="-10.500" width="9" height="9" rx="2.500" fill="#ee7038" />
        <rect x="-19" y="-10.500" width="9" height="9" rx="2.500" fill="#2b3a64" />
        <rect x="-34" y="6" width="9" height="9" rx="2.500" fill="#2d66e2" />
        <rect x="-19" y="6" width="9" height="9" rx="2.500" fill="#2b3a64" />
        <rect x="1" y="-18" width="34" height="15" fill="#26384f" />
        <path d="M30-18h5v15h-9q3-6 4-15Z" fill="#58c08a" />
        <rect x="1.500" y="-2" width="33" height="29" fill="#191a1c" stroke="#20364a" strokeWidth="1" />
        <path d="M4 2h18M4 4.500h9" stroke="#5c5557" strokeWidth="1" />
        <text x="10" y="-10.500" fontSize="5.500" fontWeight="600" fill="#e4e8ee" textLength="16" lengthAdjust="spacingAndGlyphs">3:58 PM</text>
        <rect x="13" y="14.500" width="28" height="28" rx="6.500" fill="url(#zoomBlue)" />
        <text x="27" y="31" fontSize="8.500" fontWeight="600" fill="#fff" textAnchor="middle" textLength="20">zoom</text>
      </Slot>
      <Slot>
        <path d="M-32-28l9-9 10 1 8-6 8 5 10-3 8 7 9 3 3 6-6 8h-52Z" fill="#dedede" />
        <path d="M-23-27l12-6 3 10ZM8-24l8-10 12 9Z" fill="#5a5552" />
        <path d="M-10-29l12-4-2 9-9 1Z" fill="#53c290" />
        <path d="M8-27l9-6 4 8-10 3Z" fill="#4a68b4" />
        <path d="M4-25l5-6v9Z" fill="#e07440" />
        <path d="M-33-28L-23 35q1 7 23 8 22-1 23-8L33-28Q0-14-33-28Z" fill="url(#bin)" opacity=".92" />
        <path d="M-33-28L-23 35q1 7 23 8 22-1 23-8L33-28Q0-14-33-28Z" fill="url(#binX)" />
        <path d="M-33-29q33 15 66 0" fill="none" stroke="#a9abac" strokeWidth="1.500" />
      </Slot>
    </nav>
  );
}

/* ----------------------------------------------------------------- desktop */

function Wallpaper() {
  return (
    <svg className="absolute inset-0" width="3456" height="2234" viewBox="0 0 3456 2234">
      <rect width="3456" height="2234" fill="#050505" />
      <path d="M3356 2096h17l-10 60-4-30Z" fill="#6e6e6e" />
      <path d="M3378 2096h16l-22 90-4-10Z" fill="#7a7a7a" />
      <path d="M3380 2130q2 6-8 34" stroke="#c0c0c0" strokeWidth="3" fill="none" />
      <path d="M3456 2104q-24 50-44 130" stroke="#6c6c6c" strokeWidth="2" fill="none" />
      <path d="M2481 2222h128l2 12H2488Z" fill="#a5a5a5" />
      <path d="M1900 2222q70-6 110 12h-50l-20-8ZM3120 2224l30 10h-40ZM3172 2224h24l-12 10h-6ZM3290 2226l40-2-16 10Z" fill="#555" />
      <g stroke="#3a3a3a" strokeWidth="2">
        <path d="M300 2226h16M480 2232l6-6M700 2226l8 8M760 2226l-6 8M1190 2226h10M1340 2230l20-6M1460 2226l-20 8M1500 2226l-16 8M1640 2230h30M1720 2226l-20 8M1820 2226l8 8M2100 2228h14M2300 2226l10 6" />
      </g>
    </svg>
  );
}

export default function App() {
  return (
    <div className="relative h-[2234px] w-[3456px] overflow-hidden bg-black font-['Inter',sans-serif]">
      <Wallpaper />
      <TerminalBehind />
      <EditorBehind />
      <MessageBehind />
      <PreviewWindow />
      <Dock />
      <div className="relative">
        <MenuBar />
      </div>
    </div>
  );
}
